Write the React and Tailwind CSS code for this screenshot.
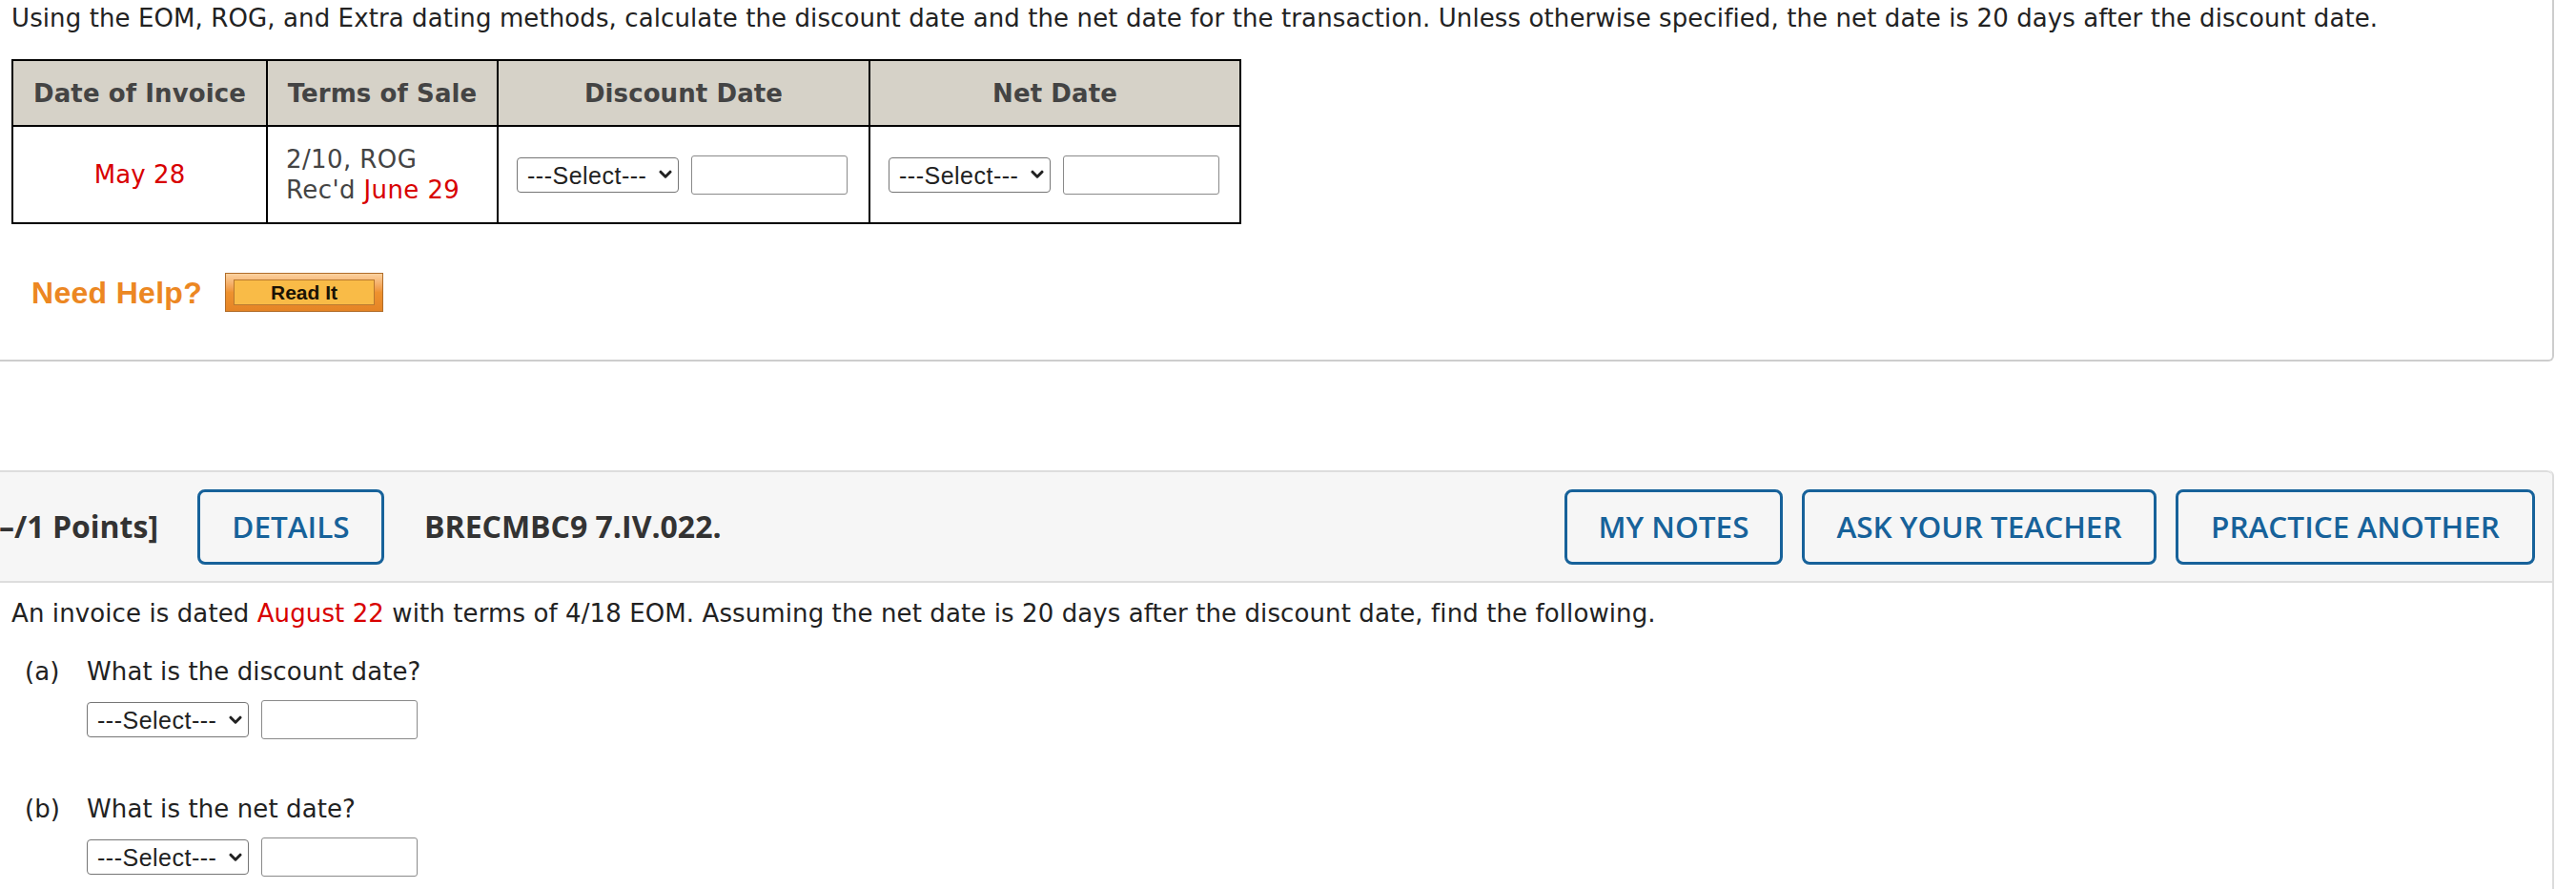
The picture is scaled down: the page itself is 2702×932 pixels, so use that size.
import React from "react";

const VF = "font-['DejaVu_Sans',Verdana,sans-serif]";
const OF = "font-['Open_Sans',sans-serif]";
const AF = "font-['Liberation_Sans',Arial,sans-serif]";

function Chevron() {
  return (
    <svg width="14" height="10" viewBox="0 0 14 10" className="absolute right-[7px] top-1/2 -translate-y-1/2 pointer-events-none">
      <path d="M2 2.2 L7 7.2 L12 2.2" fill="none" stroke="#222" strokeWidth="3" strokeLinecap="round" strokeLinejoin="round" />
    </svg>
  );
}

function SelectBox() {
  return (
    <div className="relative w-[170px] h-[37px]">
      <select className={`${AF} appearance-none w-full h-full border-[1.5px] border-[#767676] rounded-[4px] bg-white pl-[10px] text-[25px] tracking-[0.5px] text-[#222] outline-none`} defaultValue="">
        <option value="">---Select---</option>
      </select>
      <Chevron />
    </div>
  );
}

function InputBox() {
  return <input type="text" className="w-[164px] h-[41px] border-[1.5px] border-[#8a8a8a] rounded-[3px] bg-white outline-none" />;
}

function DateAnswer() {
  return (
    <div className="flex items-center gap-[13px]">
      <SelectBox />
      <InputBox />
    </div>
  );
}

const BTN = "h-[79px] border-[3px] border-[#17629a] rounded-[8px] text-[#17629a] font-semibold text-[31.5px] leading-none flex items-center justify-center";

export default function App() {
  return (
    <div className="relative w-[2702px] h-[932px] overflow-hidden bg-white">
      {/* Card 1 */}
      <div className="w-[2679px] h-[379px] border-r-2 border-b-2 border-[#cdcdcd] rounded-br-[6px] pl-[12px] pt-[4px]">
        <p className={`${VF} text-[26px] leading-[30px] text-[#222] tracking-[0.1px] whitespace-nowrap`}>
          Using the EOM, ROG, and Extra dating methods, calculate the discount date and the net date for the transaction. Unless otherwise specified, the net date is 20 days after the discount date.
        </p>
        <div className={`${VF} mt-[28px] w-[1290px] border-2 border-black text-[26px] tracking-[0.1px]`}>
          <div className="flex h-[69px] bg-[#d6d2c8] border-b-2 border-black font-bold text-[#444] leading-[30px]">
            <div className="w-[267px] border-r-2 border-black flex items-center justify-center">Date of Invoice</div>
            <div className="w-[242px] border-r-2 border-black flex items-center justify-center">Terms of Sale</div>
            <div className="w-[390px] border-r-2 border-black flex items-center justify-center">Discount Date</div>
            <div className="flex-1 flex items-center justify-center">Net Date</div>
          </div>
          <div className="flex h-[100px]">
            <div className="w-[267px] border-r-2 border-black flex items-center justify-center text-[#d80000] leading-[30px]">May 28</div>
            <div className="w-[242px] border-r-2 border-black flex flex-col justify-center pl-[19px] text-[#444] leading-[32px] tracking-[0.4px]">
              <span>2/10, ROG</span>
              <span>
                Rec'd <span className="text-[#d80000]">June 29</span>
              </span>
            </div>
            <div className="w-[390px] border-r-2 border-black flex items-center pl-[19px]">
              <DateAnswer />
            </div>
            <div className="flex-1 flex items-center pl-[19px]">
              <DateAnswer />
            </div>
          </div>
        </div>
        <div className="flex items-center mt-[51px] ml-[21px] gap-[24px]">
          <span className={`${AF} font-bold text-[32px] leading-[34px] text-[#ec8722] tracking-[0.3px]`}>Need Help?</span>
          <button className="w-[166px] h-[41px] border border-[#b06d2a] bg-gradient-to-b from-[#fbd2a0] via-[#ee922f] to-[#e58425] px-[8px] py-[6px]">
            <span className={`${AF} flex items-center justify-center w-full h-full bg-[#f9bb47] border border-[#b9792f] font-bold text-[21px] text-[#1a1205]`}>Read It</span>
          </button>
        </div>
      </div>

      {/* Card 2 */}
      <div className="mt-[114px] w-[2679px] h-[439px] border-r-2 border-[#dcdcdc] rounded-tr-[6px]">
        <div className={`${OF} flex items-center h-[118px] bg-[#f6f6f6] border-t-2 border-b-2 border-[#dddddd] rounded-tr-[6px] pr-[18px]`}>
          <div className="w-[166px] flex justify-end overflow-hidden whitespace-nowrap">
            <span className="shrink-0 font-bold text-[32px] text-[#333]">[–/1 Points]</span>
          </div>
          <button className={`${BTN} ml-[41px] w-[196px]`}>DETAILS</button>
          <span className="ml-[42px] font-bold text-[32px] text-[#333]">BRECMBC9 7.IV.022.</span>
          <div className="ml-auto flex gap-[20px]">
            <button className={`${BTN} w-[229px]`}>MY NOTES</button>
            <button className={`${BTN} w-[372px]`}>ASK YOUR TEACHER</button>
            <button className={`${BTN} w-[377px]`}>PRACTICE ANOTHER</button>
          </div>
        </div>
        <div className={`${VF} pl-[12px] pt-[17px] text-[26px] leading-[30px] text-[#222] tracking-[0.1px]`}>
          <p className="whitespace-nowrap">
            An invoice is dated <span className="text-[#d80000]">August 22</span> with terms of 4/18 EOM. Assuming the net date is 20 days after the discount date, find the following.
          </p>
          <div className="flex mt-[31px] ml-[14px]">
            <span className="w-[65px]">(a)</span>
            <span>What is the discount date?</span>
          </div>
          <div className="mt-[15px] ml-[79px]">
            <DateAnswer />
          </div>
          <div className="flex mt-[58px] ml-[14px]">
            <span className="w-[65px]">(b)</span>
            <span>What is the net date?</span>
          </div>
          <div className="mt-[15px] ml-[79px]">
            <DateAnswer />
          </div>
        </div>
      </div>
    </div>
  );
}
